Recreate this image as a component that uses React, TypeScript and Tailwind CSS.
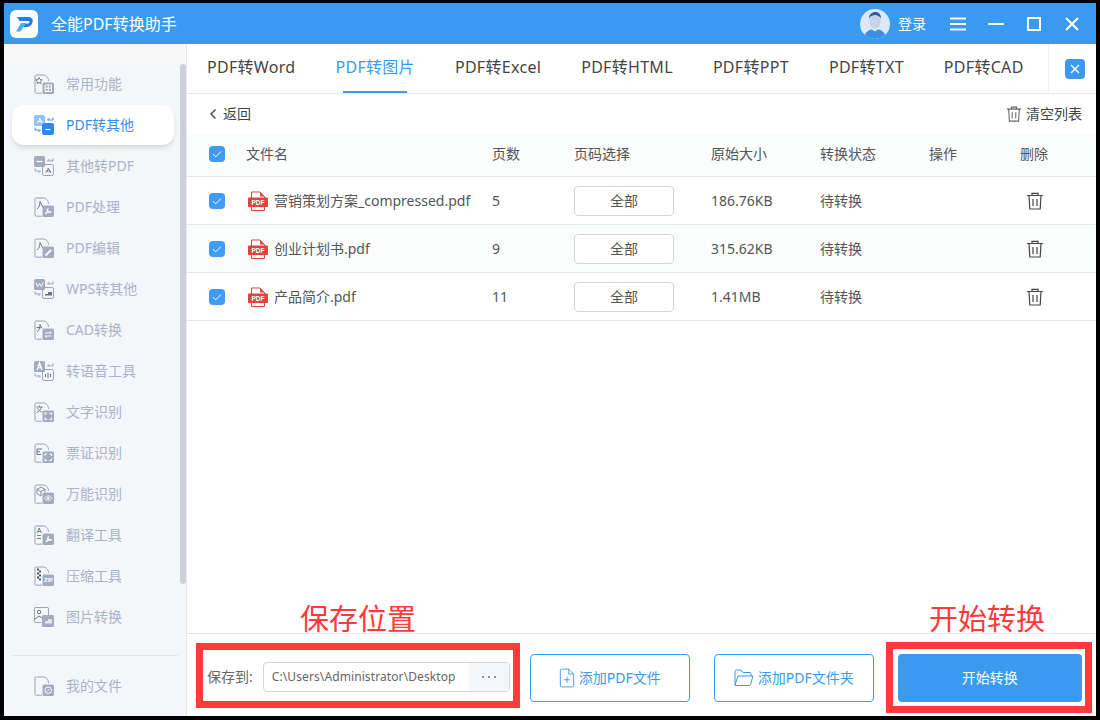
import React from "react";

const gray = "#a3abbf";
const line = "#9aa3b8";

function DocIcon({ children, outline }: { children?: React.ReactNode; outline?: React.ReactNode }) {
  return (
    <svg viewBox="0 0 20 20" className="w-5 h-5 shrink-0" fill="none">
      <path d="M8 19.2H2.2A1.2 1.2 0 0 1 1 18V2.2A1.2 1.2 0 0 1 2.2 1H9c3.2 0 5.5 2.5 5.5 6" stroke={line} strokeWidth="1" />
      {outline}
      <rect x="8.5" y="8.5" width="11.5" height="11.5" rx="1.6" fill={gray} />
      {children}
    </svg>
  );
}

function SwapIcon({ top, bottom, topFill = gray, bottomFill = "none", arrow = line }: { top?: React.ReactNode; bottom?: React.ReactNode; topFill?: string; bottomFill?: string; arrow?: string }) {
  return (
    <svg viewBox="0 0 20 20" className="w-5 h-5 shrink-0" fill="none">
      <rect x="0" y="0" width="11" height="11" rx="1.6" fill={topFill} />
      {top}
      <rect x="8.5" y="8.5" width="11" height="11" rx="1.6" fill={bottomFill} stroke={bottomFill === "none" ? line : bottomFill} />
      {bottom}
      <path d="M19 5H13.5M15.5 3l-2 2" stroke={arrow} strokeWidth="1" />
      <path d="M1 15h5.5M4.5 17l2-2" stroke={arrow} strokeWidth="1" />
      <path d="M1 12.5V15" stroke={arrow} strokeWidth="1" />
      <path d="M19 2.5V5" stroke={arrow} strokeWidth="1" />
    </svg>
  );
}

const pdfGlyph = (c: string) => <path d="M3 8.5c1.500-1 2.600-3 2.600-5.500M5.600 3l3 5.500M3.500 6.500h4.500" stroke={c} strokeWidth="1" />;

const icons: React.ReactNode[] = [
  <DocIcon key="0" outline={<path d="M5 3.500l1 2 2.200.3-1.600 1.500.4 2.200-2-1-2 1 .4-2.200L1.800 5.800 4 5.500z" stroke="#6b7280" strokeWidth=".9" />}>
    <path d="M11 14.200h6.500M14.200 11v6.500M11 11h6.500v6.500H11z" stroke="#fff" strokeWidth="1" />
  </DocIcon>,
  <SwapIcon key="1" topFill="#8fc4fb" bottomFill="#2f86ee" arrow="#3a8cf0"
    top={pdfGlyph("#fff")}
    bottom={<path d="M11.500 14.500h5" stroke="#fff" strokeWidth="1.200" />} />,
  <SwapIcon key="2" top={<path d="M2.500 5.500h6" stroke="#fff" strokeWidth="1.200" />}
    bottom={<path d="M11.500 17c1.500-1 2.600-2.500 2.600-5M14.100 12l3 5M11.800 15h4.700" stroke="#6b7280" strokeWidth=".9" />} />,
  <DocIcon key="3" outline={<path d="M3 12c2-1.500 3-4 3-7.500M6 4.500l3 6" stroke="#6b7280" strokeWidth="1" />}>
    <path d="M11.500 17l3-3.500M14.500 11.500a2 2 0 1 0 2.500 2.500" stroke="#fff" strokeWidth="1.300" />
  </DocIcon>,
  <DocIcon key="4" outline={<path d="M3 12c2-1.500 3-4 3-7.500M6 4.500l3 6" stroke="#6b7280" strokeWidth="1" />}>
    <path d="M11.500 17.500l5.500-5.500" stroke="#fff" strokeWidth="1.800" />
  </DocIcon>,
  <SwapIcon key="5" top={<path d="M2 3.500l1.500 4 2-3 2 3 1.500-4" stroke="#fff" strokeWidth="1" />}
    bottom={<path d="M11 15h3v-2h4v3.500h-7z" fill="#6b7280" />} />,
  <DocIcon key="6" outline={<path d="M3 12c2-1.500 3-4 3-7.500M2.500 7.500h4M6 4.500l2 4" stroke="#6b7280" strokeWidth="1" />}>
    <path d="M11 13h6.500M11 16h6.500M15.500 11.500l2 1.500M13 17.500l-2-1.500" stroke="#fff" strokeWidth=".9" />
  </DocIcon>,
  <SwapIcon key="7" top={<path d="M3 9l2.500-7 2.500 7M4 6.500h3" stroke="#fff" strokeWidth="1.300" />}
    bottom={<path d="M11.500 13v3M14 12v5M16.500 13v3" stroke="#6b7280" strokeWidth="1" />} />,
  <DocIcon key="8" outline={<path d="M2.500 5h6M5.500 3.500v1.500M7.500 5c-.5 2.500-2.500 4.500-5 5.500M3.500 6c.8 2 2.500 3.500 4.500 4" stroke="#6b7280" strokeWidth=".9" />}>
    <path d="M11 13v-2h2M15.500 11h2v2M17.500 15.500v2h-2M13 17.500h-2v-2" stroke="#fff" strokeWidth="1" />
  </DocIcon>,
  <DocIcon key="9" outline={<path d="M8 6H3v5.500h4M3 8.700h3" stroke="#6b7280" strokeWidth="1" />}>
    <path d="M11 13v-2h2M15.500 11h2v2M17.500 15.500v2h-2M13 17.500h-2v-2" stroke="#fff" strokeWidth="1" />
  </DocIcon>,
  <DocIcon key="10" outline={<path d="M7 3l4 2.300v3M7 3L3 5.300v4.500l4 2.200M3 5.300l4 2.300 4-2.300M7 7.600V12" stroke="#6b7280" strokeWidth=".8" />}>
    <path d="M10.500 14.200c2-3 5.500-3 7.500 0-2 3-5.500 3-7.500 0z" stroke="#fff" strokeWidth=".9" />
    <circle cx="14.200" cy="14.200" r="1.200" fill="#fff" />
  </DocIcon>,
  <DocIcon key="11" outline={<path d="M3 8l2.200-5 2.200 5M3.800 6.500h2.800M3 10.500h4M3 13.500h4" stroke="#6b7280" strokeWidth=".9" />}>
    <path d="M12 17l3-3.500M15 11.500a2 2 0 1 0 2.500 2.500" stroke="#fff" strokeWidth="1.300" />
  </DocIcon>,
  <DocIcon key="12" outline={<path d="M3 2.500h2v2H3zM5 4.500h2v2H5zM3 6.500h2v2H3zM5 8.500h2v2H5zM3 10.500h2v2H3zM5 12.500h2v2H5z" fill="#4b5563" />}>
    <text x="14.300" y="16" textAnchor="middle" fontSize="5.500" fontWeight="700" fill="#fff" fontFamily="Liberation Sans, sans-serif">ZIP</text>
  </DocIcon>,
  <svg key="13" viewBox="0 0 20 20" className="w-5 h-5 shrink-0" fill="none">
    <path d="M7.500 15.500H1.200A.8.800 0 0 1 .5 14.700V1.300A.8.800 0 0 1 1.200.5h12.600a.8.800 0 0 1 .7.800V8" stroke={line} />
    <circle cx="5" cy="5" r="1.700" stroke="#6b7280" />
    <path d="M.5 12.500L5 9l3 2" stroke="#6b7280" />
    <rect x="8" y="8" width="12" height="12" rx="1.600" fill={gray} />
    <path d="M11 14h3v-2h4v4.500h-7z" fill="#e5e7eb" />
  </svg>,
];

const sidebarItems = ["常用功能", "PDF转其他", "其他转PDF", "PDF处理", "PDF编辑", "WPS转其他", "CAD转换", "转语音工具", "文字识别", "票证识别", "万能识别", "翻译工具", "压缩工具", "图片转换"];
const tabs = ["PDF转Word", "PDF转图片", "PDF转Excel", "PDF转HTML", "PDF转PPT", "PDF转TXT", "PDF转CAD"];
const files = [
  { name: "营销策划方案_compressed.pdf", pages: "5", size: "186.76KB" },
  { name: "创业计划书.pdf", pages: "9", size: "315.62KB" },
  { name: "产品简介.pdf", pages: "11", size: "1.41MB" },
];

function Check() {
  return (
    <span className="w-4 h-4 rounded-sm bg-[#3f9bf3] flex items-center justify-center">
      <svg viewBox="0 0 16 16" className="w-4 h-4" fill="none">
        <path d="M4 8.200l2.800 2.600L12 5.500" stroke="#fff" strokeWidth="1" />
      </svg>
    </span>
  );
}

function PdfIcon() {
  return (
    <svg viewBox="0 0 20 20" className="w-5 h-5 shrink-0" fill="none">
      <path d="M3.500 7V1h8.500l4.500 4.500V7M3.500 16v3.500h13V16" stroke="#e5403a" strokeWidth="1" />
      <path d="M12 1v4.500h4.500z" fill="#e5403a" />
      <rect x="0" y="6.500" width="20" height="9.500" rx=".8" fill="#e5403a" />
      <text x="10" y="13.700" textAnchor="middle" fontSize="6.500" fontWeight="700" fill="#fff" fontFamily="Liberation Sans, sans-serif">PDF</text>
    </svg>
  );
}

function Trash({ className, stroke }: { className: string; stroke: string }) {
  return (
    <svg viewBox="0 0 18 18" className={className} fill="none">
      <path d="M1 3.500h16M6 3.500V1.300h6v2.200M3 3.500l.8 13.500h10.400L15 3.500M7 7v7M11 7v7" stroke={stroke} strokeWidth="1.200" />
    </svg>
  );
}

export default function App() {
  return (
    <div className="w-[1100px] h-[720px] bg-black pt-[3px] pb-1 px-1 flex flex-col relative overflow-hidden font-['Noto_Sans','Noto_Sans_CJK_SC',sans-serif]">
      <header className="h-[41px] shrink-0 bg-[#3a9af0] flex items-center pl-1.5 text-white">
        <span className="w-7 h-7 bg-white rounded-md flex items-center justify-center">
          <svg viewBox="0 0 24 24" className="w-6 h-6">
            <path d="M5 5h11c4 0 5.500 2.500 4.500 5.500S17 15 14 15h-3l2.500-3.500H16c1.500 0 2-2 .5-2.500H7.500z" fill="#1c7ff0" />
            <path d="M9 11h5l-5.500 8.500H4z" fill="#3fb0f7" />
          </svg>
        </span>
        <span className="ml-[13px] text-base">全能PDF转换助手</span>
        <span className="ml-auto w-[30px] h-[30px] rounded-full bg-[#dbe8f7] overflow-hidden">
          <svg viewBox="0 0 30 30" className="w-full h-full">
            <ellipse cx="15" cy="12.500" rx="5.500" ry="7" fill="#c3d3ea" />
            <path d="M9 10c0-5 3-7 6.500-7s5.500 2.500 5.500 6.500c-2-3-4-3.500-6-3.500S10 7 9 10z" fill="#2a5f9e" />
            <path d="M4 30c0-6 4-9 8-9.500l3 2 3-2c4 .5 8 3.500 8 9.500z" fill="#3d8fe6" />
          </svg>
        </span>
        <span className="ml-2 text-sm">登录</span>
        <div className="flex items-center ml-6 mr-4 gap-[22px]">
          <svg viewBox="0 0 16 14" className="w-4 h-4" fill="none"><path d="M0 1.500h16M0 7h16M0 12.500h16" stroke="#fff" strokeWidth="2" /></svg>
          <svg viewBox="0 0 16 16" className="w-4 h-4" fill="none"><path d="M0 8h16" stroke="#fff" strokeWidth="2" /></svg>
          <svg viewBox="0 0 16 16" className="w-4 h-4" fill="none"><path d="M2 2h12v12H2z" stroke="#fff" strokeWidth="2" /></svg>
          <svg viewBox="0 0 16 16" className="w-4 h-4" fill="none"><path d="M2 2l12 12M14 2L2 14" stroke="#fff" strokeWidth="2" /></svg>
        </div>
      </header>

      <div className="flex-1 flex min-h-0 bg-white">
        <aside className="w-[183px] shrink-0 flex flex-col bg-[#f5f6fa] border-r border-gray-200">
          <div className="h-5 bg-[#f9f9f9] shrink-0" />
          <div className="flex h-130 shrink-0">
            <nav className="flex-1 flex flex-col gap-px pl-2 pr-1.5">
              {sidebarItems.map((label, i) => (
                <div
                  key={label}
                  className={`h-10 shrink-0 flex items-center gap-3 pl-[22px] text-sm rounded-xl ${i === 1 ? "bg-white shadow-md text-[#3a8cf0]" : "text-[#a9b3c9]"}`}
                >
                  {icons[i]}
                  <span>{label}</span>
                </div>
              ))}
            </nav>
            <div className="w-1.5 h-130 bg-[#cdd0d8] rounded-sm" />
          </div>
          <div className="mx-2 pr-1.5 mt-[71px] border-t border-gray-200" />
          <div className="mt-2.5 h-10 flex items-center gap-3 pl-[30px] text-sm text-[#a9b3c9]">
            <DocIcon>
              <circle cx="14.200" cy="14.200" r="3.300" stroke="#fff" strokeWidth="1" />
              <path d="M13 15.500l2.500-2.500" stroke="#fff" strokeWidth="1" />
            </DocIcon>
            <span>我的文件</span>
          </div>
        </aside>

        <main className="flex-1 min-w-0 flex flex-col">
          <div className="h-12.5 shrink-0 flex border-b border-gray-200">
            <div className="flex-1 flex gap-10 pl-5 text-base tracking-[0.3px] text-[#444]">
              {tabs.map((t, i) => (
                <div key={t} className={`relative flex items-center pb-1 ${i === 1 ? "text-[#3a9af0]" : ""}`}>
                  {t}
                  {i === 1 && <span className="absolute bottom-0 left-2 right-2 h-0.5 bg-[#3a9af0]" />}
                </div>
              ))}
            </div>
            <div className="w-12 border-l border-gray-100 flex items-center justify-center pl-1">
              <span className="w-5 h-5 rounded-sm bg-[#3a9af0] flex items-center justify-center">
                <svg viewBox="0 0 12 12" className="w-3 h-3" fill="none"><path d="M2 2l8 8M10 2l-8 8" stroke="#fff" strokeWidth="1.400" /></svg>
              </span>
            </div>
          </div>

          <div className="h-10 shrink-0 flex items-center pl-5 pr-3.5 text-sm text-[#444]">
            <svg viewBox="0 0 10 14" className="w-3 h-3.5 mr-1" fill="none"><path d="M7.500 2.500L3 7l4.500 4.500" stroke="#444" strokeWidth="1.400" /></svg>
            <span>返回</span>
            <Trash className="w-4 h-4 ml-auto mr-1" stroke="#666" />
            <span>清空列表</span>
          </div>

          <div className="h-[43px] shrink-0 grid grid-cols-[37px_246px_82px_137px_109px_109px_91px_1fr] items-center pl-[22px] pb-0.5 bg-[#fbfcfc] border-b border-gray-200 text-sm text-[#555]">
            <Check />
            <span>文件名</span>
            <span>页数</span>
            <span>页码选择</span>
            <span>原始大小</span>
            <span>转换状态</span>
            <span>操作</span>
            <span>删除</span>
          </div>

          {files.map((f, i) => (
            <div
              key={f.name}
              className={`h-12 shrink-0 grid grid-cols-[37px_246px_82px_137px_109px_109px_91px_1fr] items-center pl-[22px] border-b border-gray-200 text-sm text-[#555] ${i === 1 ? "bg-[#fbfcfc]" : ""}`}
            >
              <Check />
              <span className="flex items-center gap-1.5 pl-0.5">
                <PdfIcon />
                <span>{f.name}</span>
              </span>
              <span>{f.pages}</span>
              <span className="w-25 h-7.5 border border-gray-300 rounded-sm bg-white flex items-center justify-center">全部</span>
              <span>{f.size}</span>
              <span>待转换</span>
              <span />
              <span className="pl-1.5"><Trash className="w-4.5 h-4.5" stroke="#444" /></span>
            </div>
          ))}

          <div className="mt-auto h-[83px] shrink-0 border-t border-gray-200 flex items-start pt-5 pl-5 gap-5">
            <div className="flex items-center mt-2 gap-2.5 text-sm text-[#666]">
              <span>保存到:</span>
              <div className="w-[247px] h-7.5 border border-gray-300 rounded-sm flex overflow-hidden text-xs">
                <span className="flex-1 flex items-center pl-2 tracking-[0.1px] text-[#666]">C:\Users\Administrator\Desktop</span>
                <span className="w-10 bg-[#f5f6fa] flex items-center justify-center gap-0.5">
                  <i className="w-0.5 h-0.5 rounded-full bg-gray-500" />
                  <i className="w-0.5 h-0.5 rounded-full bg-gray-500 mx-0.5" />
                  <i className="w-0.5 h-0.5 rounded-full bg-gray-500" />
                </span>
              </div>
            </div>
            <div className="flex gap-6 text-sm">
              <button className="w-40 h-12 border border-[#3a9af0] rounded-sm text-[#3a9af0] flex items-center justify-center gap-1">
                <svg viewBox="0 0 18 22" className="w-4 h-5" fill="none">
                  <path d="M2.500 1h8.500l5.500 5.500V20a1 1 0 0 1-1 1h-13a1 1 0 0 1-1-1V2a1 1 0 0 1 1-1zM11 1v5.500h5.500M5.500 13h7M9 9.500v7" stroke="#3a9af0" strokeWidth="1" />
                </svg>
                添加PDF文件
              </button>
              <button className="w-40 h-12 border border-[#3a9af0] rounded-sm text-[#3a9af0] flex items-center justify-center gap-1">
                <svg viewBox="0 0 20 18" className="w-5 h-5" fill="none">
                  <path d="M1 16V2.500A1.500 1.500 0 0 1 2.500 1H7l2 2.500h7a1 1 0 0 1 1 1V7M1 16.500h14a1.500 1.500 0 0 0 1.500-1L19 7H4L1 16" stroke="#3a9af0" strokeWidth="1" />
                </svg>
                添加PDF文件夹
              </button>
              <button className="w-46 h-12 rounded-sm bg-[#3a9af0] text-white">开始转换</button>
            </div>
          </div>
        </main>
      </div>

      <span className="absolute left-[300px] top-[599px] text-[29px] leading-10 text-[#ff3a3a] whitespace-nowrap">保存位置</span>
      <span className="absolute left-[929px] top-[599px] text-[29px] leading-10 text-[#ff3a3a] whitespace-nowrap">开始转换</span>
      <div className="absolute left-[196px] top-[643px] w-[324px] h-[65px] border-[7px] border-[#ff3a3a]" />
      <div className="absolute left-[886px] top-[642px] w-[206px] h-[71px] border-[7px] border-[#ff3a3a]" />
    </div>
  );
}
